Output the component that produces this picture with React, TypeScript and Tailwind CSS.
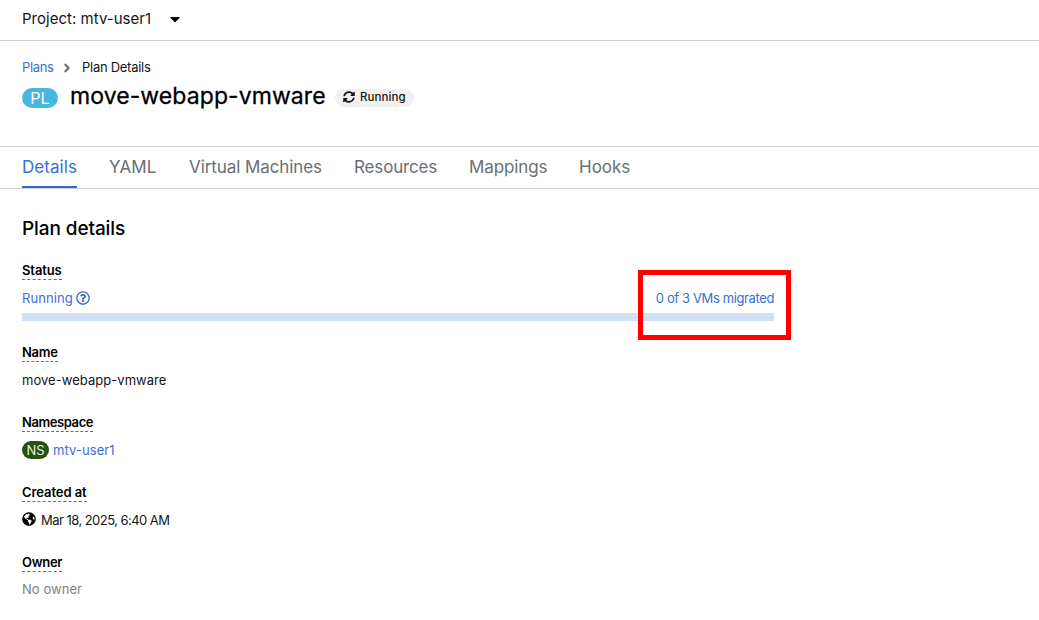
import type { ReactNode } from 'react';
import { FaAngleRight, FaCaretDown, FaGlobeAmericas, FaRegQuestionCircle, FaSyncAlt } from 'react-icons/fa';

const tabs = [
  { label: 'Details', width: 'w-[55px] tracking-[0.06px]', active: true },
  { label: 'YAML', width: 'w-12 tracking-[0.1px]', active: false },
  { label: 'Virtual Machines', width: 'w-[133px] tracking-[-0.08px]', active: false },
  { label: 'Resources', width: 'w-[83px] tracking-[-0.15px]', active: false },
  { label: 'Mappings', width: 'w-[78px] tracking-[-0.1px]', active: false },
  { label: 'Hooks', width: 'w-[51px]', active: false },
];

function Field({ label, tracking, children }: { label: string; tracking: string; children: ReactNode }) {
  return (
    <div className="flex h-[70px] flex-col items-start">
      <dt className={`h-[19px] border-b border-dashed border-[#6a6e73] text-[13px] leading-[18px] font-semibold text-black ${tracking}`}>{label}</dt>
      <dd className="mt-2 flex h-5 items-center text-[13px] leading-5">{children}</dd>
    </div>
  );
}

export default function App() {
  return (
    <div className="min-h-[620px] overflow-hidden bg-white font-['Inter',sans-serif] text-[#151515]">
      <div className="flex h-[41px] items-center gap-4 border-b border-[#d2d2d2] px-[22px] pb-[3px]">
        <span className="pt-px text-[15px] tracking-[0.02px]">Project: mtv-user1</span>
        <FaCaretDown className="size-4 text-black" />
      </div>

      <header className="flex h-[105px] flex-col px-[22px] pt-[17px]">
        <nav className="flex h-5 items-center text-[13px]">
          <a className="w-8 tracking-[-0.35px] text-[#3b6fd4]">Plans</a>
          <FaAngleRight className="ml-[6px] size-[14px] text-[#6a6e73]" />
          <span className="ml-2 tracking-[-0.28px]">Plan Details</span>
        </nav>
        <div className="mt-px flex h-9 items-center">
          <span className="mt-px flex h-5 w-9 items-center justify-center rounded-full bg-[#49b6e2] text-[16px] text-white">PL</span>
          <h1 className="-mt-[2px] ml-3 w-[257px] text-[23px] whitespace-nowrap tracking-[0.08px] text-black [-webkit-text-stroke:0.3px_black]">move-webapp-vmware</h1>
          <span className="mt-px ml-2 flex h-[18px] w-[79px] items-center rounded-full bg-[#f0f0f0] pl-2 text-[11.5px] font-medium">
            <FaSyncAlt className="mr-[5px] size-3 -translate-y-px" />
            <span className="tracking-[0.08px]">Running</span>
          </span>
        </div>
      </header>

      <div className="flex h-[43px] gap-8 border-y border-[#d2d2d2] px-[22px] text-[17px] whitespace-nowrap">
        {tabs.map((tab) => (
          <div
            key={tab.label}
            className={`${tab.width} flex h-[41px] items-center border-b-2 pt-[2px] ${tab.active ? 'border-[#3266cc] text-[#3b6fd4]' : 'border-transparent text-[#6a6e73]'}`}
          >
            {tab.label}
          </div>
        ))}
      </div>

      <main className="relative px-[22px] pt-[26px]">
        <h2 className="h-[28px] text-[19px] leading-[28px] font-medium tracking-[-0.1px] text-black">Plan details</h2>
        <dl className="mt-[18px]">
          <div className="flex h-[82px] w-[752px] flex-col items-start">
            <dt className="h-[19px] border-b border-dashed border-[#6a6e73] text-[13px] leading-[18px] font-semibold tracking-[-0.1px] text-black">Status</dt>
            <dd className="mt-2 w-full text-[13px] leading-5 text-[#3b6fd4]">
              <div className="flex h-5 items-center justify-between">
                <span className="flex items-center">
                  <span className="w-[51px] tracking-[0.08px]">Running</span>
                  <FaRegQuestionCircle className="ml-[3px] size-[14px] text-[#3266cc]" />
                </span>
                <span className="tracking-[-0.38px]">0 of 3 VMs migrated</span>
              </div>
              <div className="mt-[5px] h-2 bg-[#d0e0f5]" />
            </dd>
          </div>
          <Field label="Name" tracking="tracking-[-0.3px]">
            <span className="tracking-[0.04px]">move-webapp-vmware</span>
          </Field>
          <Field label="Namespace" tracking="tracking-[-0.42px]">
            <span className="flex h-[18px] w-[27px] items-center justify-center rounded-full bg-[#26520f] text-[13px] text-[#e8f0e4]">NS</span>
            <a className="ml-1 tracking-[0.08px] text-[#3b6fd4]">mtv-user1</a>
          </Field>
          <Field label="Created at" tracking="tracking-[-0.08px]">
            <FaGlobeAmericas className="mr-[5px] size-[14px] -translate-y-px text-black" />
            <span className="tracking-[-0.54px]">Mar 18, 2025, 6:40 AM</span>
          </Field>
          <Field label="Owner" tracking="tracking-[-0.3px]">
            <span className="-mt-[2px] tracking-[0.05px] text-[#7c7f83]">No owner</span>
          </Field>
        </dl>
        <div className="absolute top-[81px] left-[638px] h-[70px] w-[153px] border-5 border-[#ff0000]" />
      </main>
    </div>
  );
}
